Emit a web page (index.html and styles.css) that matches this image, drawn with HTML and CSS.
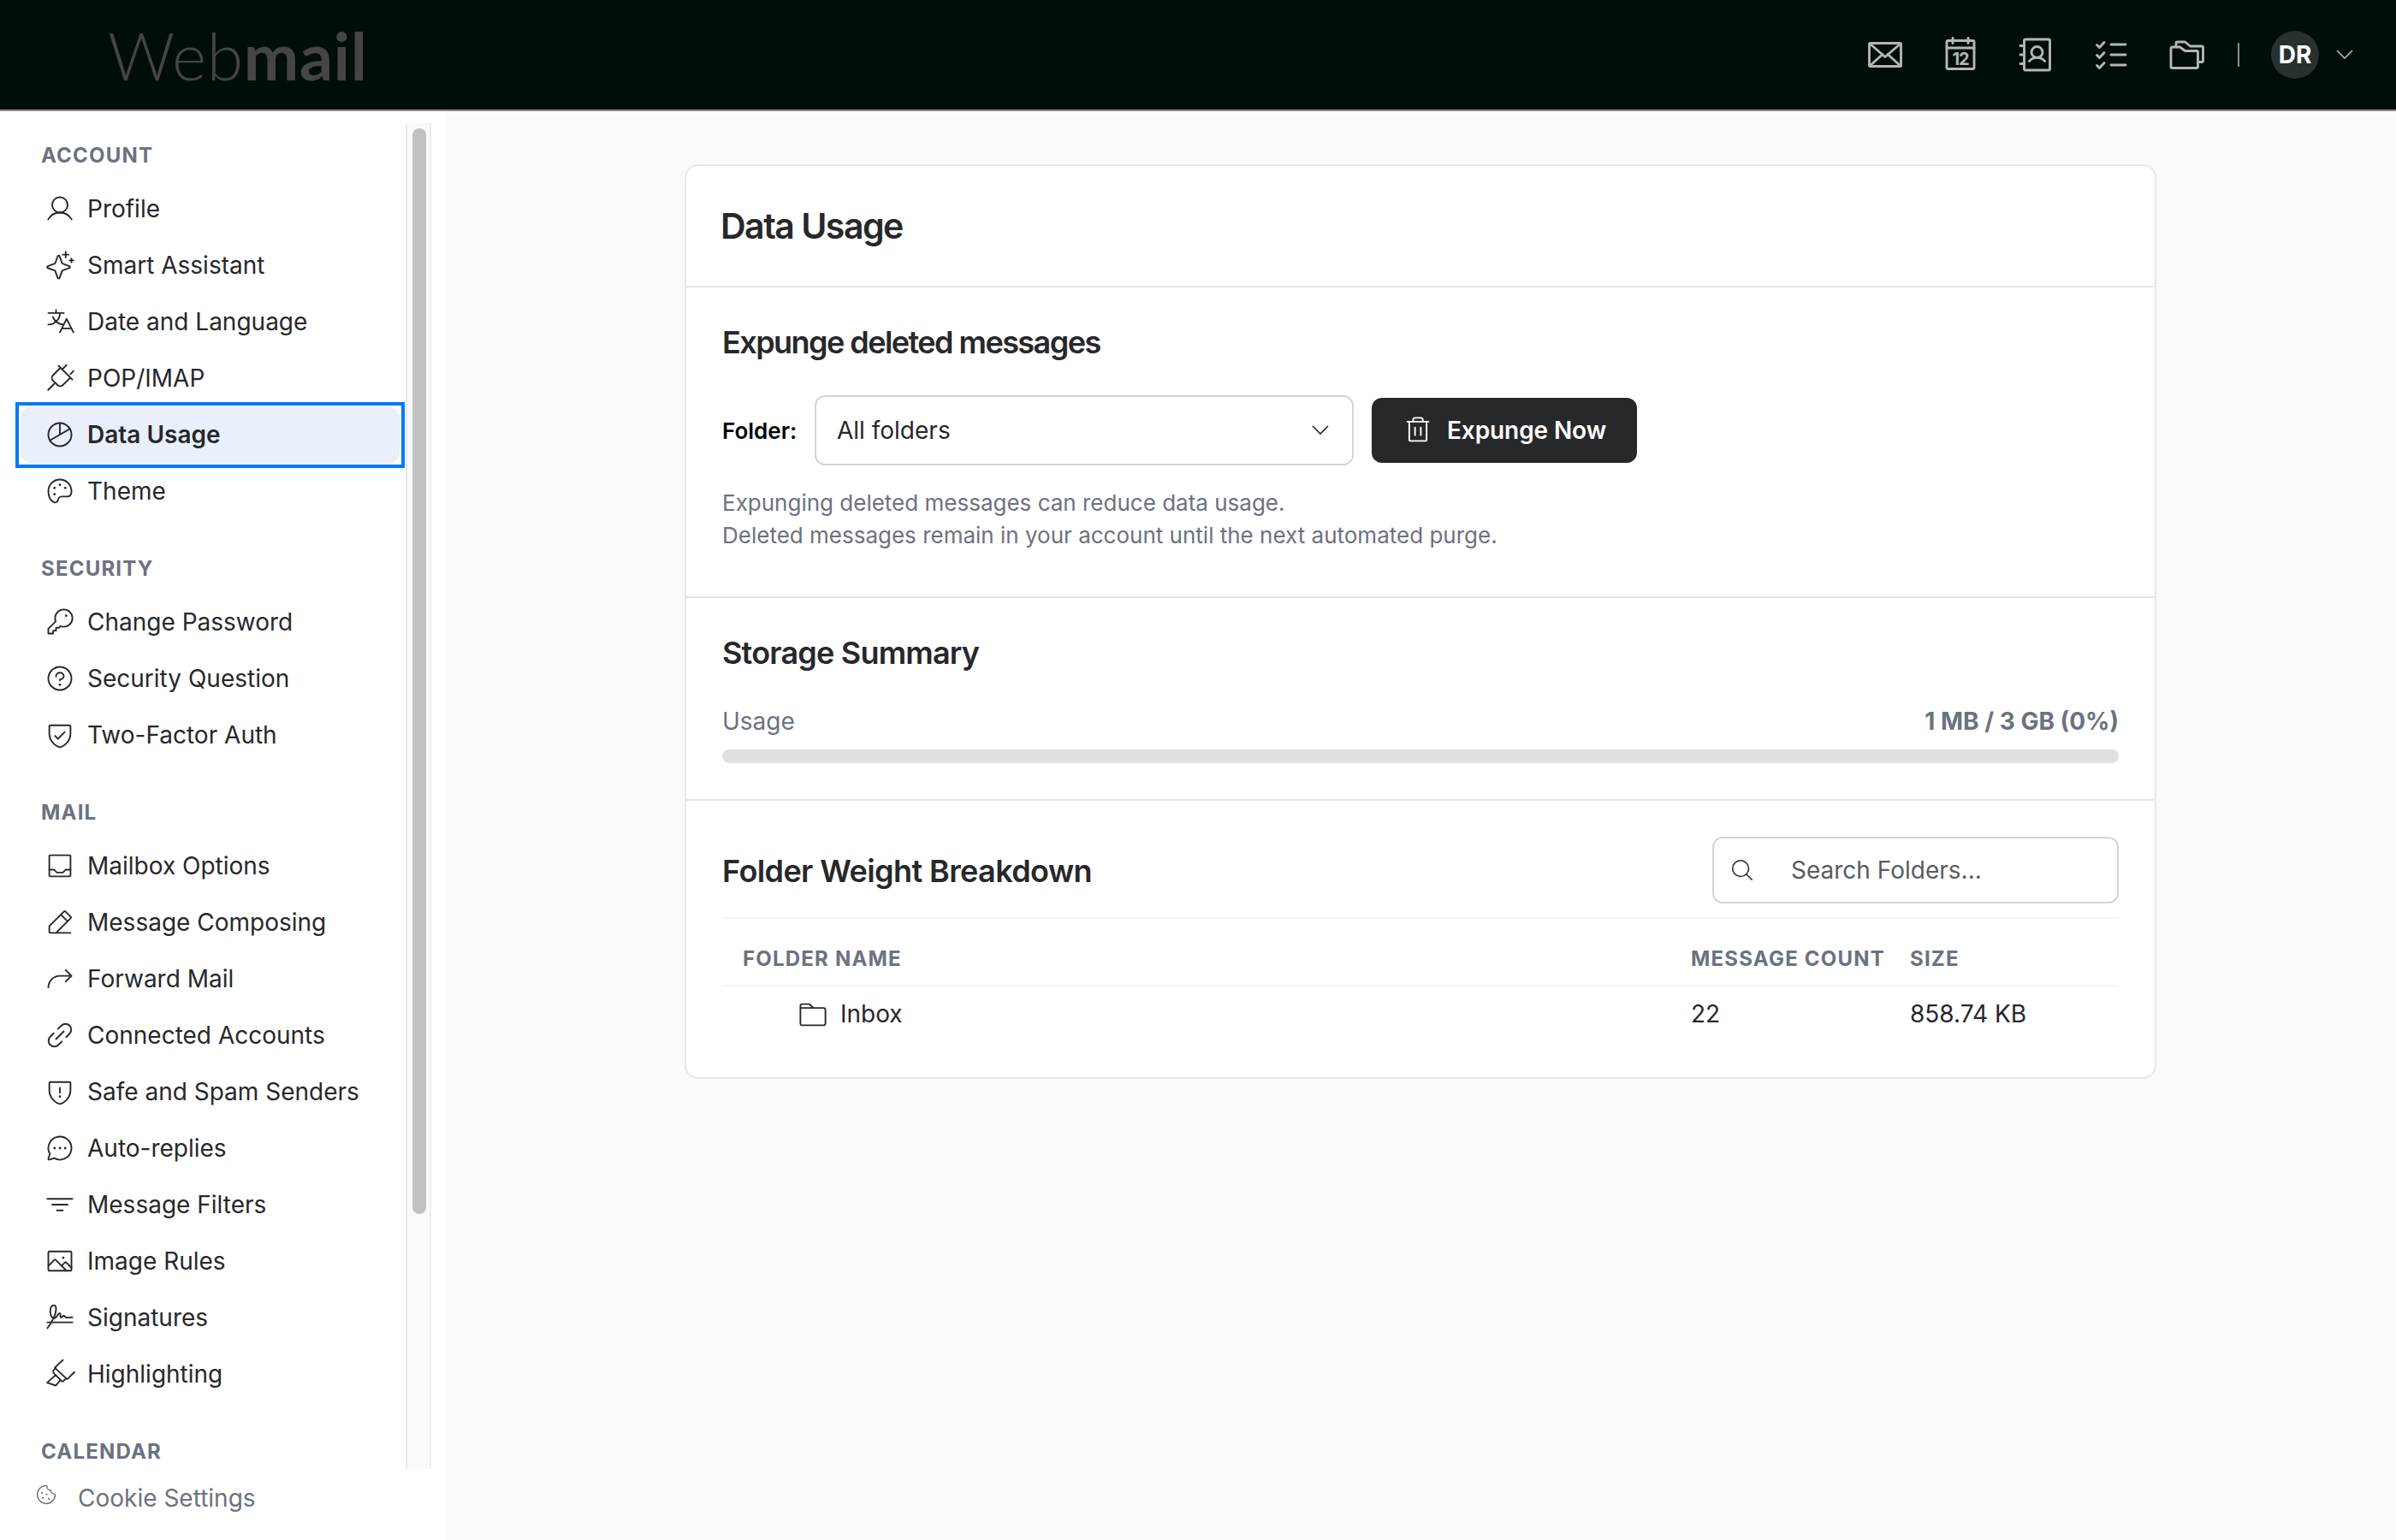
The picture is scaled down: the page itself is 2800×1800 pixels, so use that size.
FILE: index.html
```html
<!DOCTYPE html>
<html lang="en">
<head>
    <meta charset="UTF-8">
    <meta name="viewport" content="width=device-width, initial-scale=1.0">
    <title>Webmail - Data Usage</title>
    <link rel="stylesheet" href="styles.css">
</head>
<body>
    <header class="topbar">
        <div class="logo"><span class="logo-thin">Web</span><span class="logo-bold">mail</span></div>
        <div class="topbar-right">
            <nav class="app-nav">
                <a href="#" class="app-link">
                    <svg viewBox="0 0 48 48"><rect x="5.500" y="10.500" width="37" height="27" rx="1.500"/><path d="M6 11l18 15.500L42 11M6 37l15-13.500M42 37L27 23.500"/></svg>
                </a>
                <a href="#" class="app-link">
                    <svg viewBox="0 0 48 48"><rect x="8" y="7.500" width="32" height="33" rx="1.500"/><path d="M8 16h32M15 4.500v6M33 4.500v6"/><text x="24" y="36" class="cal-day">12</text></svg>
                </a>
                <a href="#" class="app-link">
                    <svg viewBox="0 0 48 48"><rect x="10.500" y="6" width="30" height="36" rx="1.500"/><path d="M6 13.500h4.500M6 24h4.500M6 34.500h4.500"/><circle cx="25.500" cy="21" r="6.500"/><path d="M16.500 31.500c4-5.500 14-5.500 18 0"/></svg>
                </a>
                <a href="#" class="app-link">
                    <svg viewBox="0 0 48 48"><path d="M7.500 12.500l3 3 5.500-6M7.500 24.500l3 3 5.500-6M7.500 36.500l3 3 5.500-6M24 12h17M24 24h17M24 36h17"/></svg>
                </a>
                <a href="#" class="app-link">
                    <svg viewBox="0 0 48 48"><path d="M6 17a2 2 0 0 1 2-2h8.500l6 4.500H36a1.500 1.500 0 0 1 1.500 1.500v17a1.500 1.500 0 0 1-1.500 1.500H7.500A1.500 1.500 0 0 1 6 38z"/><path d="M12 15v-4.500A1.500 1.500 0 0 1 13.500 9h9l6 5H42a1.500 1.500 0 0 1 1.500 1.500V31a1.500 1.500 0 0 1-1.500 1.500h-4.500"/></svg>
                </a>
            </nav>
            <div class="divider"></div>
            <div class="account">
                <div class="avatar">DR</div>
                <svg class="caret" viewBox="0 0 20 12"><path d="M1 1l9 9 9-9"/></svg>
            </div>
        </div>
    </header>

    <div class="layout">
        <aside class="sidebar">
            <div class="sidebar-scroll">
                <nav class="menu">
                    <h3 class="menu-heading">Account</h3>
                    <a href="#" class="menu-item">
                        <svg viewBox="0 0 256 256"><circle cx="128" cy="96" r="64"/><path d="M31 216a112 112 0 0 1 194 0"/></svg>
                        Profile
                    </a>
                    <a href="#" class="menu-item">
                        <svg viewBox="0 0 256 256"><path d="M84.300 171.700L27.500 151a8 8 0 0 1 0-15l56.800-20.700a8 8 0 0 0 5-5L110 53.500a8 8 0 0 1 15 0l20.700 56.800a8 8 0 0 0 5 5L207.500 136a8 8 0 0 1 0 15l-56.800 20.700a8 8 0 0 0-5 5L125 233.500a8 8 0 0 1-15 0l-20.700-56.800a8 8 0 0 0-5-5zM176 16v48M200 40h-48M224 72v32M240 88h-32"/></svg>
                        Smart Assistant
                    </a>
                    <a href="#" class="menu-item">
                        <svg viewBox="0 0 256 256"><path d="M240 216l-56-112-56 112M144 184h80M96 32v24M32 56h128M128 56a96 96 0 0 1-96 96M69.500 88A96 96 0 0 0 160 152"/></svg>
                        Date and Language
                    </a>
                    <a href="#" class="menu-item">
                        <svg viewBox="0 0 256 256"><path d="M30 226l50-50M117 25l114 114M215 95l26-26M147 55l36-36M215 123l-62 62a32 32 0 0 1-45 0l-37-37a32 32 0 0 1 0-45l62-62"/></svg>
                        POP/IMAP
                    </a>
                    <div class="menu-focus">
                        <a href="#" class="menu-item active">
                            <svg viewBox="0 0 256 256"><circle cx="128" cy="128" r="96"/><path d="M128 128V32M211 80L45 176"/></svg>
                            Data Usage
                        </a>
                    </div>
                    <a href="#" class="menu-item">
                        <svg viewBox="0 0 256 256"><path d="M221.600 149.400A32 32 0 0 1 190.400 173H144a32 32 0 0 0-32 32 24 24 0 0 1-32 16C50 207 32 171 32 129a96 96 0 0 1 95-97c53-.4 97 42 97 95a98 98 0 0 1-2.400 22.400z"/><g class="dots"><circle cx="128" cy="76" r="10"/><circle cx="83" cy="102" r="10"/><circle cx="83" cy="154" r="10"/><circle cx="173" cy="102" r="10"/></g></svg>
                        Theme
                    </a>

                    <h3 class="menu-heading">Security</h3>
                    <a href="#" class="menu-item">
                        <svg viewBox="0 0 256 256"><path d="M93 123a71 71 0 0 1-5-27 72 72 0 1 1 72 72 71 71 0 0 1-27-5l-13 13H96v24H72v24H32v-40z"/><g class="dots"><circle cx="180" cy="76" r="10"/></g></svg>
                        Change Password
                    </a>
                    <a href="#" class="menu-item">
                        <svg viewBox="0 0 256 256"><circle cx="128" cy="128" r="96"/><path d="M128 144v-8c17.700 0 32-12.500 32-28s-14.300-28-32-28-32 12.500-32 28v4"/><g class="dots"><circle cx="128" cy="180" r="10"/></g></svg>
                        Security Question
                    </a>
                    <a href="#" class="menu-item">
                        <svg viewBox="0 0 256 256"><path d="M40 114V56a8 8 0 0 1 8-8h160a8 8 0 0 1 8 8v58c0 84-71 112-85.500 116a8 8 0 0 1-5 0C111 226 40 198 40 114z"/><path d="M88 136l24 24 56-56"/></svg>
                        Two-Factor Auth
                    </a>

                    <h3 class="menu-heading">Mail</h3>
                    <a href="#" class="menu-item">
                        <svg viewBox="0 0 256 256"><rect x="40" y="40" width="176" height="176" rx="8"/><path d="M40 160h36.700a8 8 0 0 1 5.700 2.300l19.300 19.400a8 8 0 0 0 5.600 2.300h41.400a8 8 0 0 0 5.600-2.300l19.300-19.400a8 8 0 0 1 5.700-2.300H216"/></svg>
                        Mailbox Options
                    </a>
                    <a href="#" class="menu-item">
                        <svg viewBox="0 0 256 256"><path d="M216 216H48a8 8 0 0 1-8-8v-44.700a8 8 0 0 1 2.300-5.600L162.300 37.700a8 8 0 0 1 11.400 0l44.600 44.600a8 8 0 0 1 0 11.400L96 216M136 64l56 56"/></svg>
                        Message Composing
                    </a>
                    <a href="#" class="menu-item">
                        <svg viewBox="0 0 256 256"><path d="M176 152l48-48-48-48M32 200a96 96 0 0 1 96-96h96"/></svg>
                        Forward Mail
                    </a>
                    <a href="#" class="menu-item">
                        <svg viewBox="0 0 256 256"><path d="M96 160l64-64M112 76.100l30.100-30a48 48 0 0 1 67.800 67.800L179.900 144M76.100 112l-30 30.100a48 48 0 0 0 67.800 67.800L144 179.900"/></svg>
                        Connected Accounts
                    </a>
                    <a href="#" class="menu-item">
                        <svg viewBox="0 0 256 256"><path d="M40 114V56a8 8 0 0 1 8-8h160a8 8 0 0 1 8 8v58c0 84-71 112-85.500 116a8 8 0 0 1-5 0C111 226 40 198 40 114z"/><path d="M128 96v40"/><g class="dots"><circle cx="128" cy="168" r="10"/></g></svg>
                        Safe and Spam Senders
                    </a>
                    <a href="#" class="menu-item">
                        <svg viewBox="0 0 256 256"><path d="M79.900 211a96 96 0 1 0-35-35l-12.500 37.500a8 8 0 0 0 10.100 10.100z"/><g class="dots"><circle cx="128" cy="128" r="10"/><circle cx="84" cy="128" r="10"/><circle cx="172" cy="128" r="10"/></g></svg>
                        Auto-replies
                    </a>
                    <a href="#" class="menu-item">
                        <svg viewBox="0 0 256 256"><path d="M64 128h128M24 80h208M104 176h48"/></svg>
                        Message Filters
                    </a>
                    <a href="#" class="menu-item">
                        <svg viewBox="0 0 256 256"><rect x="32" y="48" width="192" height="160" rx="8"/><path d="M32 168l50-50a8 8 0 0 1 11 0l90 90M142 168l28-28a8 8 0 0 1 11 0l43 43"/><g class="dots"><circle cx="156" cy="100" r="10"/></g></svg>
                        Image Rules
                    </a>
                    <a href="#" class="menu-item">
                        <svg viewBox="0 0 256 256"><path d="M232 168H24M24 216c34-41 72-113 72-160 0-20-8-30-19-30-16 0-29 18-29 54 0 30 14 56 30 56 22 0 34-44 48-44 12 0 2 36 12 36 9 0 12-16 22-16 8 0 8 16 24 16 16 0 32-2 48-2"/></svg>
                        Signatures
                    </a>
                    <a href="#" class="menu-item">
                        <svg viewBox="0 0 256 256"><path d="M248 112l-54 54a8 8 0 0 1-11 0L90 81a8 8 0 0 1 0-11l62-58M74 98l0 16a8 8 0 0 0 2 6l68 68a8 8 0 0 0 12 0l22-22M94 74L74 98M92 136l-70 64 72 24 38-46"/></svg>
                        Highlighting
                    </a>

                    <h3 class="menu-heading">Calendar</h3>
                </nav>
                <div class="scroll-track"><div class="scroll-thumb"></div></div>
            </div>
            <a href="#" class="cookie-link">
                <svg viewBox="0 0 256 256"><path d="M224 127.400a95.600 95.600 0 0 1-28.200 68.500c-36.700 36.700-96.100 37.300-133.100.9A96 96 0 0 1 128.600 32a8 8 0 0 1 7.400 8 40 40 0 0 0 40 40 40 40 0 0 0 40 40 8 8 0 0 1 8 7.400z"/><g class="dots"><circle cx="156" cy="172" r="10"/><circle cx="92" cy="164" r="10"/><circle cx="84" cy="108" r="10"/><circle cx="132" cy="124" r="10"/></g></svg>
                Cookie Settings
            </a>
        </aside>

        <main class="content">
            <div class="card">
                <section class="card-header">
                    <h1>Data Usage</h1>
                </section>

                <section class="expunge">
                    <h2>Expunge deleted messages</h2>
                    <div class="expunge-row">
                        <label class="folder-label">Folder:</label>
                        <div class="select">
                            <span>All folders</span>
                            <svg class="caret" viewBox="0 0 20 12"><path d="M1 1l9 9 9-9"/></svg>
                        </div>
                        <button type="button" class="btn">
                            <svg viewBox="0 0 256 256"><path d="M216 56H40M104 104v64M152 104v64M200 56v152a8 8 0 0 1-8 8H64a8 8 0 0 1-8-8V56M168 56V40a16 16 0 0 0-16-16h-48a16 16 0 0 0-16 16v16"/></svg>
                            <span>Expunge Now</span>
                        </button>
                    </div>
                    <p class="hint">Expunging deleted messages can reduce data usage.<br>Deleted messages remain in your account until the next automated purge.</p>
                </section>

                <section class="storage">
                    <h2>Storage Summary</h2>
                    <div class="usage-row">
                        <span>Usage</span>
                        <strong>1 MB / 3 GB (0%)</strong>
                    </div>
                    <div class="usage-bar"></div>
                </section>

                <section class="breakdown">
                    <div class="breakdown-header">
                        <h2>Folder Weight Breakdown</h2>
                        <div class="search">
                            <svg viewBox="0 0 256 256"><circle cx="112" cy="112" r="80"/><path d="M168.600 168.600L224 224"/></svg>
                            <input type="text" placeholder="Search Folders...">
                        </div>
                    </div>
                    <div class="table">
                        <div class="table-head">
                            <span>Folder Name</span>
                            <span>Message Count</span>
                            <span>Size</span>
                        </div>
                        <div class="table-row">
                            <span class="folder">
                                <svg viewBox="0 0 256 256"><path d="M216 72h-85L104 44.700A16 16 0 0 0 92.700 40H40a16 16 0 0 0-16 16v144.600A15.400 15.400 0 0 0 39.400 216h177.500a15 15 0 0 0 15-15V88a16 16 0 0 0-16-16zM24 72h107"/></svg>
                                <span>Inbox</span>
                            </span>
                            <span>22</span>
                            <span>858.74 KB</span>
                        </div>
                    </div>
                </section>
            </div>
        </main>
    </div>
</body>
</html>
```
FILE: styles.css
```css
* {
    margin: 0;
    padding: 0;
    box-sizing: border-box;
}

body {
    height: 1800px;
    overflow: hidden;
    display: flex;
    flex-direction: column;
    font-family: 'Inter', 'Liberation Sans', sans-serif;
    font-size: 28px;
    color: #27282a;
    background-color: #f9fafc;
}

a {
    color: inherit;
    text-decoration: none;
}

svg {
    display: block;
    flex: none;
    fill: none;
    stroke: currentColor;
    stroke-linecap: round;
    stroke-linejoin: round;
    stroke-width: 13.5;
}

.dots {
    fill: currentColor;
    stroke: none;
}

/* Top bar */
.topbar {
    flex: none;
    height: 130px;
    padding: 0 50px 0 126px;
    display: flex;
    align-items: center;
    justify-content: space-between;
    background-color: #000e0a;
    border-bottom: 2px solid #8c8f8e;
}

.logo {
    font-family: 'Lato', sans-serif;
    font-size: 77px;
    line-height: 90px;
    letter-spacing: 0.6px;
    color: #464444;
    white-space: nowrap;
}

.logo-thin {
    font-weight: 300;
}

.logo-bold {
    font-weight: 700;
}

.topbar-right,
.app-nav,
.account {
    display: flex;
    align-items: center;
}

.app-nav {
    gap: 40px;
    color: #b2b7b5;
}

.app-link svg {
    width: 48px;
    height: 48px;
    stroke-width: 2.9;
}

.cal-day {
    font-size: 20px;
    font-weight: 700;
    letter-spacing: -1px;
    text-anchor: middle;
    fill: currentColor;
    stroke: none;
}

.divider {
    width: 2px;
    height: 28px;
    margin: 0 37px 0 36px;
    background-color: #8c8f8e;
}

.account {
    gap: 20px;
}

.avatar {
    width: 56px;
    height: 56px;
    line-height: 56px;
    border-radius: 50%;
    text-align: center;
    font-weight: 700;
    color: #ffffff;
    background-color: #27312f;
}

.caret {
    width: 20px;
    height: 12px;
    stroke-width: 1.6;
    stroke-linecap: butt;
    stroke-linejoin: miter;
}

.account .caret {
    color: #b2b7b5;
}

/* Sidebar */
.layout {
    flex: 1;
    display: flex;
    min-height: 0;
}

.sidebar {
    width: 520px;
    padding-top: 14px;
    background-color: #ffffff;
}

.sidebar-scroll {
    height: 1573px;
    display: flex;
    overflow: hidden;
}

.menu {
    width: 474px;
    padding: 0 7px 0 24px;
}

.menu-heading {
    height: 50px;
    margin-top: 32px;
    padding-left: 24px;
    line-height: 51px;
    font-size: 24px;
    font-weight: 700;
    letter-spacing: 1.2px;
    text-transform: uppercase;
    color: #6b7280;
}

.menu-heading:first-child {
    margin-top: 12px;
}

.menu-heading + .menu-item {
    margin-top: 6px;
}

.menu-item {
    height: 65px;
    margin-bottom: 1px;
    padding: 0 0 2px 28px;
    display: flex;
    align-items: center;
    gap: 14px;
    border-radius: 12px;
    white-space: nowrap;
}

.menu-item svg {
    width: 36px;
    height: 36px;
}

.menu-item.active {
    margin-bottom: 0;
    font-weight: 600;
    background-color: #e9effb;
}

.menu-focus {
    margin-bottom: 1px;
    outline: 4px solid #0078ff;
    outline-offset: 2px;
}

.scroll-track {
    width: 30px;
    padding: 6px;
    background-color: #fafafa;
    border-left: 2px solid #e8e8e8;
    border-right: 2px solid #ededed;
}

.scroll-thumb {
    width: 16px;
    height: 1269px;
    border-radius: 8px;
    background-color: #c1c1c1;
}

.cookie-link {
    height: 66px;
    padding: 2px 0 0 40px;
    display: flex;
    align-items: center;
    gap: 23px;
    color: #6b7280;
}

.cookie-link svg {
    width: 28px;
    height: 28px;
    margin-bottom: 8px;
}

/* Content */
.content {
    flex: 1;
    padding-top: 62px;
    display: flex;
    justify-content: center;
    align-items: flex-start;
}

.card {
    width: 1720px;
    height: 1069px;
    background-color: #ffffff;
    border: 2px solid #e5e7eb;
    border-radius: 16px;
}

.card section {
    padding: 0 42px;
    border-bottom: 2px solid #e5e7eb;
}

.card section:last-child {
    border-bottom: none;
}

h1,
h2 {
    font-weight: 600;
    white-space: nowrap;
}

h1 {
    margin-left: -2px;
    font-size: 41px;
    line-height: 140px;
    letter-spacing: -1.5px;
}

h2 {
    font-size: 36px;
    line-height: 44px;
    letter-spacing: -0.8px;
}

.card .expunge {
    height: 363px;
    padding-top: 42px;
}

.expunge h2 {
    letter-spacing: -1.55px;
}

.expunge-row {
    margin-top: 40px;
    display: flex;
    align-items: center;
}

.folder-label {
    width: 108px;
    font-size: 26px;
    font-weight: 600;
    color: #000000;
}

.select {
    width: 630px;
    height: 82px;
    padding: 0 27px 0 24px;
    display: flex;
    align-items: center;
    justify-content: space-between;
    border: 2px solid #d1d5db;
    border-radius: 12px;
}

.btn {
    width: 310px;
    height: 76px;
    margin-left: 21px;
    padding-left: 36px;
    display: flex;
    align-items: center;
    gap: 16px;
    font: inherit;
    font-weight: 600;
    letter-spacing: -0.1px;
    color: #ffffff;
    background-color: #27282a;
    border: none;
    border-radius: 12px;
    cursor: pointer;
}

.btn svg {
    width: 36px;
    height: 36px;
}

.hint {
    margin-top: 25px;
    font-size: 26px;
    line-height: 38px;
    color: #6b7280;
}

.card .storage {
    height: 237px;
    padding-top: 42px;
}

.usage-row {
    margin-top: 38px;
    display: flex;
    justify-content: space-between;
    line-height: 40px;
    color: #6b7280;
}

.usage-row strong {
    font-weight: 700;
}

.usage-bar {
    height: 16px;
    margin-top: 13px;
    border-radius: 8px;
    background-color: #e0e0e0;
}

.card .breakdown {
    padding-top: 42px;
}

.breakdown-header {
    display: flex;
    align-items: center;
    justify-content: space-between;
}

.breakdown-header h2 {
    padding-top: 2px;
    letter-spacing: -0.6px;
}

.search {
    width: 475px;
    height: 78px;
    padding-left: 18px;
    display: flex;
    align-items: center;
    gap: 42px;
    border: 2px solid #d1d5db;
    border-radius: 12px;
}

.search svg {
    width: 30px;
    height: 30px;
}

.search input {
    width: 300px;
    font: inherit;
    border: none;
    outline: none;
    background: none;
}

.search input::placeholder {
    color: #595c61;
}

/* Folder table */
.table {
    margin-top: 16px;
    border-top: 2px solid #f3f4f6;
}

.table-head,
.table-row {
    display: grid;
    grid-template-columns: 1108px 256px 1fr;
    align-items: center;
    padding-left: 24px;
}

.table-head {
    height: 79px;
    padding-top: 16px;
    border-bottom: 2px solid #f3f4f6;
    font-size: 24px;
    font-weight: 700;
    letter-spacing: 1.2px;
    text-transform: uppercase;
    color: #6b7280;
}

.table-row {
    height: 64px;
}

.folder {
    display: flex;
    align-items: center;
    gap: 14px;
    padding-left: 64px;
}

.folder svg {
    width: 36px;
    height: 36px;
    margin-top: 2px;
}
```
